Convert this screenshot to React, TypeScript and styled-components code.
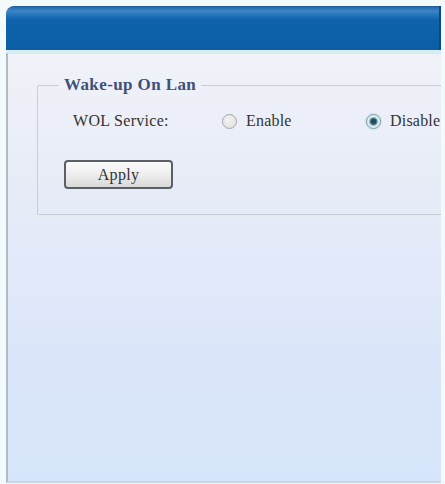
import React from "react";
import styled, { createGlobalStyle } from "styled-components";

const GlobalStyle = createGlobalStyle`
  html, body {
    margin: 0;
    padding: 0;
    background: #f3fafb;
  }
  body {
    font-family: "Liberation Serif", "Times New Roman", serif;
  }
`;

const Page = styled.div`
  width: 445px;
  height: 484px;
  padding: 6px 4px 1px 6px;
  box-sizing: border-box;
  overflow: hidden;
`;

const Panel = styled.div`
  display: flex;
  flex-direction: column;
  height: 100%;
`;

const Header = styled.div`
  height: 44px;
  border-radius: 8px 0 0 0;
  border-right: 2px solid #0b4a80;
  background: linear-gradient(
    to bottom,
    #1f5f9c 0px,
    #3d86c8 5px,
    #2a78bd 8px,
    #0e63ab 14px,
    #0b5ea4 100%
  );
`;

const Strip = styled.div`
  height: 3px;
  background: #d6eef3;
`;

const Body = styled.div`
  flex: 1;
  overflow: hidden;
  border-left: 2px solid #aebcc6;
  border-bottom: 2px solid #cbd7e2;
  border-top: 1px solid #dfe5ec;
  padding: 21px 0 0 29px;
  background: linear-gradient(
    to bottom,
    #f0f2f8 0%,
    #e6ebf7 35%,
    #dbe6fa 70%,
    #d7e5fc 100%
  );
`;

const Fieldset = styled.fieldset`
  width: 440px;
  margin: 0;
  padding: 14px 0 25px 26px;
  border: 1px solid #c9ced6;
  border-radius: 2px;
  box-sizing: border-box;
`;

const Legend = styled.legend`
  padding: 0 5px;
  margin-left: -5px;
  font-size: 17px;
  font-weight: bold;
  letter-spacing: 0.4px;
  color: #3f5079;
`;

const Row = styled.div`
  display: flex;
  align-items: center;
  height: 24px;
  font-size: 16px;
  color: #333;
`;

const Label = styled.span`
  width: 149px;
  margin-left: 9px;
  letter-spacing: 0.3px;
`;

const Option = styled.label<{ $width?: number }>`
  display: flex;
  align-items: center;
  gap: 9px;
  width: ${(p) => (p.$width ? `${p.$width}px` : "auto")};
  letter-spacing: 0.2px;
`;

const Radio = styled.span<{ $checked?: boolean }>`
  width: 13px;
  height: 13px;
  border-radius: 50%;
  border: 1px solid ${(p) => (p.$checked ? "#7b9aa6" : "#a3a8ad")};
  background: ${(p) =>
    p.$checked
      ? "radial-gradient(circle, #1d4f5c 0 2.5px, #6d98a4 3.5px, #dfeef2 5px)"
      : "radial-gradient(circle at 40% 40%, #f4f4f4, #dcdcdc)"};
  box-shadow: ${(p) => (p.$checked ? "0 0 2px #9fc3cc" : "none")};
  flex-shrink: 0;
`;

const ButtonRow = styled.div`
  margin-top: 27px;
`;

const Button = styled.button`
  width: 109px;
  height: 29px;
  border: 2px solid #5a6068;
  border-radius: 4px;
  background: linear-gradient(to bottom, #fbfbfb 0%, #eeeeee 50%, #d9d9d9 100%);
  font-family: "Liberation Serif", "Times New Roman", serif;
  font-size: 16px;
  color: #333;
  letter-spacing: 0.3px;
  padding: 0;
`;

export default function App() {
  return (
    <>
      <GlobalStyle />
      <Page>
        <Panel>
          <Header />
          <Strip />
          <Body>
            <Fieldset>
              <Legend>Wake-up On Lan</Legend>
              <Row>
                <Label>WOL Service:</Label>
                <Option $width={144}>
                  <Radio />
                  Enable
                </Option>
                <Option>
                  <Radio $checked />
                  Disable
                </Option>
              </Row>
              <ButtonRow>
                <Button>Apply</Button>
              </ButtonRow>
            </Fieldset>
          </Body>
        </Panel>
      </Page>
    </>
  );
}
